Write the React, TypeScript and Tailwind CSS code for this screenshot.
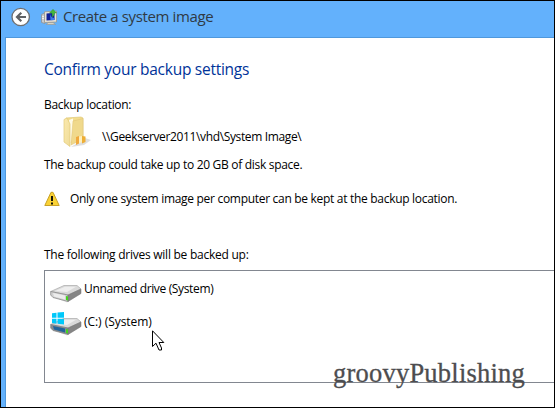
import type { ReactNode } from 'react';
import clsx from 'clsx';

interface Drive {
  id: string;
  label: string;
  textClass: string;
  hasWindows: boolean;
}

const drives: Drive[] = [
  { id: 'unnamed', label: 'Unnamed drive (System)', textClass: 'tracking-[-0.35px]', hasWindows: false },
  { id: 'c', label: '(C:) (System)', textClass: 'tracking-[-0.05px]', hasWindows: true },
];

function BackIcon() {
  return (
    <svg width="20" height="20" viewBox="0 0 20 20" className="shrink-0">
      <circle cx="9.700" cy="10" r="8.700" fill="#fff" stroke="#6d6f72" strokeWidth="1.3" />
      <path d="M15 10H6.500M10.300 5.800 6 10l4.300 4.200" fill="none" stroke="#606265" strokeWidth="2.2" />
    </svg>
  );
}

function SystemImageIcon() {
  return (
    <svg width="17" height="17" viewBox="0 0 17 17" className="shrink-0">
      <path d="M.5 5.500 4 4v10.500l-3.500-1z" fill="#c9cacc" stroke="#8b9096" strokeWidth=".8" />
      <path d="M1 7.500h2M1 9.500h2" stroke="#eee" />
      <path d="M3.500 2.800 15.500 2v11l-12 .5z" fill="#e8e4d8" stroke="#99978f" strokeWidth=".8" />
      <path d="M5.500 4.500 13.500 3.700v7.300l-8 .5z" fill="#10219a" />
      <path d="M9 5c1 3 2.500 4 4.500 4v2l-4 .3z" fill="#3e7be8" />
      <path d="M7 13.500h5l2.500 2h-9z" fill="#d8d3c5" stroke="#96938a" strokeWidth=".6" />
      <path d="M8.500 4 12 .3 15.500 4h-2c0 2-.7 3-2.500 4 .5-1.500.3-3-.3-4z" fill="#45b83b" stroke="#2a8b37" strokeWidth=".4" />
    </svg>
  );
}

function FolderIcon() {
  return (
    <svg width="30" height="32" viewBox="0 0 30 32" className="shrink-0">
      <defs>
        <linearGradient id="folderFront" x1="0" y1="0" x2="1" y2="1">
          <stop offset="0" stopColor="#fbe9ae" />
          <stop offset="1" stopColor="#efdc98" />
        </linearGradient>
      </defs>
      <path d="M9 31 22 29l7-5-6-2z" fill="#b8b8b8" opacity=".45" />
      <path d="M4 2 19 1l2 1v22L9 27z" fill="#f3dd8d" stroke="#e0c979" strokeWidth=".7" />
      <path d="M7 4l4-1.500v19L8 28z" fill="#fffbe8" />
      <path d="M11 5 21 2.500V23l-12 6z" fill="#f0d98c" stroke="#dfc374" strokeWidth=".5" />
      <path d="M2 3.500 5 2l3 6v22.500L2 26z" fill="url(#folderFront)" stroke="#e2ca78" strokeWidth=".7" />
      <path d="m14 21 3-1v7.500l-3 1.500z" fill="#f0a93d" />
      <path d="m17 20.500 3-.5v6l-3 1.500z" fill="#fff0bd" />
      <path d="m20 20 3.500.5v5.500L20 27.500z" fill="#eeae35" />
    </svg>
  );
}

function WarningIcon() {
  return (
    <svg width="16" height="16" viewBox="0 0 16 16" className="shrink-0">
      <path d="M7 1.300h2l6.200 13.200H.8z" fill="#fad235" stroke="#c8a126" strokeLinejoin="round" />
      <path d="M7 5h2v5H7zM7 11.500h2v2H7z" fill="#171508" />
    </svg>
  );
}

function DriveIcon({ hasWindows }: { hasWindows: boolean }) {
  return (
    <svg width="32" height="26" viewBox="0 0 32 26" className="shrink-0">
      <path d="M2 17.500 17 23.500l13-8v-4L15 17z" fill="#bbb" opacity=".4" />
      <path d="M.7 12.500 14 6.500h13l4 3.500-13 6z" fill="#d9d9d9" stroke="#a9a9a9" strokeWidth=".7" />
      <path d="m5 12 10-4.300h11L17 13z" fill="#eeeeee" />
      <path d="M.7 12.500 18 16v6.500L3 18.500.7 16z" fill={hasWindows ? '#858b90' : '#d0d0d0'} stroke="#818181" strokeWidth=".7" />
      <path d="m18 16 13-6v4.500l-13 8z" fill="#858585" stroke="#707070" strokeWidth=".5" />
      <path d="m3 14 12 2.500v4L4 17.500z" fill={hasWindows ? '#226399' : '#ececec'} />
      <path d="m16 17 2 .4v4l-2-.5z" fill="#43d61c" />
      {hasWindows && (
        <path d="m2 1.300 4.500-.6v5H2zM7.500.5 14 0v5.700H7.500zM2 6.700h4.500v5L2 11zM7.500 6.700H14v5.800l-6.500-.8z" fill="#00c8fa" />
      )}
    </svg>
  );
}

function CursorIcon() {
  return (
    <svg width="13" height="22" viewBox="0 0 13 22" className="absolute left-[151px] top-[329px]">
      <path d="M.5.800v15.700l3.500-3.300 3 6.800h2.500v-2l-2.500-5.500h4.800z" fill="#fff" stroke="#000" />
    </svg>
  );
}

function Line({ className, children }: { className?: string; children: ReactNode }) {
  return <p className={clsx('whitespace-pre text-[12px] leading-4', className)}>{children}</p>;
}

export default function App() {
  return (
    <div className="relative h-[408px] w-[555px] overflow-hidden border border-black bg-[#63b1fc] font-['Open_Sans','Noto_Sans',sans-serif] text-black">
      <header className="flex h-9 items-center pl-2.5 pb-1">
        <BackIcon />
        <span className="ml-2.5">
          <SystemImageIcon />
        </span>
        <h1 className="-mt-0.5 ml-[5px] whitespace-pre text-[15px] leading-5 tracking-[-0.38px] text-[#303a44]">Create a system image</h1>
      </header>

      <main className="ml-1 h-[370px] border-l border-t border-[#4f98dc] bg-white pl-[38px]">
        <h2 className="mt-[21px] whitespace-pre text-[15.500px] leading-5 tracking-[-0.26px] text-[#003399]">Confirm your backup settings</h2>
        <Line className="mt-[18px] tracking-[-0.3px]">Backup location:</Line>
        <div className="mt-[3px] flex h-8 items-start pl-[18px]">
          <FolderIcon />
          <Line className="ml-2.5 mt-[13px] tracking-[-0.36px]">{'\\\\Geekserver2011\\vhd\\System Image\\'}</Line>
        </div>
        <Line className="mt-[9px] tracking-[-0.3px]">The backup could take up to 20 GB of disk space.</Line>
        <div className="mt-[18px] flex h-4 items-center">
          <WarningIcon />
          <Line className="ml-2.5 tracking-[-0.3px]">Only one system image per computer can be kept at the backup location.</Line>
        </div>
        <Line className="mt-10 tracking-[-0.25px]">The following drives will be backed up:</Line>
        <ul className="mt-[7px] h-[113px] border-y border-l border-[#828790] pl-[5px] pt-2">
          {drives.map((drive) => (
            <li key={drive.id} className="flex h-[33px] items-start">
              <DriveIcon hasWindows={drive.hasWindows} />
              <Line className={clsx('ml-[2px] mt-0.5', drive.textClass)}>{drive.label}</Line>
            </li>
          ))}
        </ul>
      </main>

      <CursorIcon />
      <span className="absolute left-[332px] top-[356px] whitespace-pre font-['Liberation_Serif',serif] text-[26.500px] leading-8 tracking-[0.22px] text-[#4d4d4f] [-webkit-text-stroke:0.3px_#4d4d4f]">groovyPublishing</span>
    </div>
  );
}
